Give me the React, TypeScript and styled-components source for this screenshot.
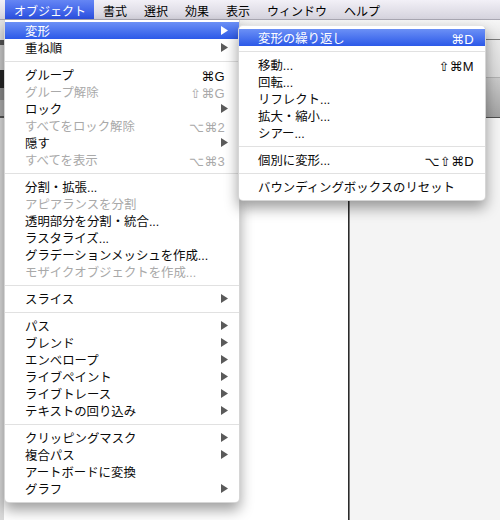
import React from "react";
import styled, { createGlobalStyle } from "styled-components";

type Entry =
  | { sep: true }
  | {
      sep?: false;
      label: string;
      shortcut?: string;
      sub?: boolean;
      disabled?: boolean;
      active?: boolean;
    };

const SEP: Entry = { sep: true };

const topMenus = ["書式", "選択", "効果", "表示", "ウィンドウ", "ヘルプ"];

const objectMenu: Entry[] = [
  { label: "変形", sub: true, active: true },
  { label: "重ね順", sub: true },
  SEP,
  { label: "グループ", shortcut: "⌘G" },
  { label: "グループ解除", shortcut: "⇧⌘G", disabled: true },
  { label: "ロック", sub: true },
  { label: "すべてをロック解除", shortcut: "⌥⌘2", disabled: true },
  { label: "隠す", sub: true },
  { label: "すべてを表示", shortcut: "⌥⌘3", disabled: true },
  SEP,
  { label: "分割・拡張..." },
  { label: "アピアランスを分割", disabled: true },
  { label: "透明部分を分割・統合..." },
  { label: "ラスタライズ..." },
  { label: "グラデーションメッシュを作成..." },
  { label: "モザイクオブジェクトを作成...", disabled: true },
  SEP,
  { label: "スライス", sub: true },
  SEP,
  { label: "パス", sub: true },
  { label: "ブレンド", sub: true },
  { label: "エンベロープ", sub: true },
  { label: "ライブペイント", sub: true },
  { label: "ライブトレース", sub: true },
  { label: "テキストの回り込み", sub: true },
  SEP,
  { label: "クリッピングマスク", sub: true },
  { label: "複合パス", sub: true },
  { label: "アートボードに変換" },
  { label: "グラフ", sub: true },
];

const transformMenu: Entry[] = [
  { label: "変形の繰り返し", shortcut: "⌘D", active: true },
  SEP,
  { label: "移動...", shortcut: "⇧⌘M" },
  { label: "回転..." },
  { label: "リフレクト..." },
  { label: "拡大・縮小..." },
  { label: "シアー..." },
  SEP,
  { label: "個別に変形...", shortcut: "⌥⇧⌘D" },
  SEP,
  { label: "バウンディングボックスのリセット" },
];

// Liberation Sans first so the line metrics stay compact; kana/kanji fall back to Noto CJK
const uiFont = `"Liberation Sans", "Noto Sans CJK JP", sans-serif`;

const GlobalStyle = createGlobalStyle`
  html, body {
    margin: 0;
    padding: 0;
  }
  body {
    width: 500px;
    height: 520px;
    overflow: hidden;
    background: #f4f4f4;
    font-family: ${uiFont};
  }
`;

const Screen = styled.div`
  position: relative;
  width: 500px;
  height: 520px;
  overflow: hidden;
  display: flex;
  flex-direction: column;
`;

const MenuBar = styled.div`
  height: 19px;
  flex-shrink: 0;
  display: flex;
  align-items: stretch;
  padding-left: 5px;
  background: linear-gradient(#f2f0f7, #d5d3dd);
  border-bottom: 1px solid #a9a7b2;
`;

const BarItem = styled.div<{ $active?: boolean }>`
  display: flex;
  align-items: center;
  padding: 1px 8px 0 9px;
  font-size: 12px;
  color: ${({ $active }) => ($active ? "#fff" : "#000")};
  background: ${({ $active }) =>
    $active ? "linear-gradient(#6586f4, #2b50e2)" : "transparent"};
`;

const Workspace = styled.div`
  flex: 1;
  display: flex;
`;

const LeftDock = styled.div`
  width: 4px;
  display: flex;
  flex-direction: column;
  background: #dadada;
`;

const DockPiece = styled.div<{ $h: number; $bg: string }>`
  height: ${({ $h }) => $h}px;
  background: ${({ $bg }) => $bg};
`;

const MainArea = styled.div`
  flex: 1;
  display: flex;
  flex-direction: column;
`;

const ControlBar = styled.div`
  height: 19px;
  background: linear-gradient(#f6f6f6, #e6e6e6);
  border-bottom: 1px solid #7a7a7a;
`;

const PanelUpper = styled.div`
  height: 37px;
  background: linear-gradient(#e9e9e9, #d9d9d9);
  border-bottom: 1px solid #b0b0b0;
`;

const PanelLower = styled.div`
  height: 39px;
  background: linear-gradient(#cacaca, #a2a2a2);
  border-bottom: 1px solid #4f4f4f;
`;

const CanvasRow = styled.div`
  flex: 1;
  display: flex;
`;

const Document = styled.div`
  width: 344px;
  background: #fff;
`;

const Divider = styled.div`
  width: 1px;
  background: #2b2b2b;
  border-right: 1px solid #7d7d7d;
`;

const Pasteboard = styled.div`
  flex: 1;
  background: #f4f4f4;
`;

const MenuPanel = styled.div<{
  $left: number;
  $top: number;
  $width: number;
  $attached?: boolean;
}>`
  position: absolute;
  left: ${({ $left }) => $left}px;
  top: ${({ $top }) => $top}px;
  width: ${({ $width }) => $width}px;
  box-sizing: border-box;
  padding: ${({ $attached }) => ($attached ? "2px 0 5px" : "3px 0 5px")};
  background: #fff;
  border: 1px solid rgba(0, 0, 0, 0.16);
  border-top: ${({ $attached }) =>
    $attached ? "none" : "1px solid rgba(0,0,0,0.1)"};
  border-radius: ${({ $attached }) => ($attached ? "0 0 5px 5px" : "5px")};
  box-shadow: 0 7px 14px rgba(0, 0, 0, 0.38);
  z-index: ${({ $attached }) => ($attached ? 1 : 2)};
`;

const Row = styled.div<{
  $active?: boolean;
  $disabled?: boolean;
  $padLeft: number;
}>`
  height: 17px;
  display: flex;
  align-items: center;
  padding: 0 11px 0 ${({ $padLeft }) => $padLeft}px;
  font-size: 12.4px;
  line-height: 17px;
  white-space: nowrap;
  color: ${({ $active, $disabled }) =>
    $active ? "#fff" : $disabled ? "#a9a9a9" : "#0a0a0a"};
  background: ${({ $active }) =>
    $active ? "linear-gradient(#6b90f6, #2c59e8)" : "transparent"};
`;

const Label = styled.span`
  flex: 1;
  padding-top: 3px;
`;

const Shortcut = styled.span<{ $inset: number }>`
  margin-right: ${({ $inset }) => $inset}px;
  padding-top: 3px;
  font-family: "Liberation Sans", "DejaVu Sans", sans-serif;
  font-size: 13px;
  letter-spacing: 0.3px;
`;

const Separator = styled.div`
  height: 10px;
  display: flex;
  align-items: center;

  &::after {
    content: "";
    flex: 1;
    height: 1px;
    background: #e1e1e1;
  }
`;

const Arrow = ({ light }: { light?: boolean }) => (
  <svg width="7" height="9" viewBox="0 0 7 9">
    <polygon points="0,0 7,4.5 0,9" fill={light ? "#fff" : "#5a5a5a"} />
  </svg>
);

function Menu({
  entries,
  left,
  top,
  width,
  attached,
  padLeft,
  inset,
}: {
  entries: Entry[];
  left: number;
  top: number;
  width: number;
  attached?: boolean;
  padLeft: number;
  inset: number;
}) {
  return (
    <MenuPanel $left={left} $top={top} $width={width} $attached={attached}>
      {entries.map((e, i) =>
        e.sep ? (
          <Separator key={i} />
        ) : (
          <Row
            key={i}
            $active={e.active}
            $disabled={e.disabled}
            $padLeft={padLeft}
          >
            <Label>{e.label}</Label>
            {e.shortcut && <Shortcut $inset={inset}>{e.shortcut}</Shortcut>}
            {e.sub && <Arrow light={e.active} />}
          </Row>
        )
      )}
    </MenuPanel>
  );
}

export default function App() {
  return (
    <>
      <GlobalStyle />
      <Screen>
        <MenuBar>
          <BarItem $active>オブジェクト</BarItem>
          {topMenus.map((m) => (
            <BarItem key={m}>{m}</BarItem>
          ))}
        </MenuBar>

        <Workspace>
          <LeftDock>
            <DockPiece $h={20} $bg="#e4e4e4" />
            <DockPiece $h={5} $bg="#555" />
            <DockPiece $h={25} $bg="#c9c9c9" />
            <DockPiece $h={18} $bg="#262626" />
            <DockPiece $h={12} $bg="#8a8a8a" />
            <DockPiece $h={16} $bg="#ababab" />
            <DockPiece $h={2} $bg="#555" />
          </LeftDock>
          <MainArea>
            <ControlBar />
            <PanelUpper />
            <PanelLower />
            <CanvasRow>
              <Document />
              <Divider />
              <Pasteboard />
            </CanvasRow>
          </MainArea>
        </Workspace>

        <Menu
          entries={objectMenu}
          left={4}
          top={20}
          width={236}
          attached
          padLeft={20}
          inset={3}
        />
        <Menu
          entries={transformMenu}
          left={238}
          top={25}
          width={248}
          padLeft={19}
          inset={0}
        />
      </Screen>
    </>
  );
}
